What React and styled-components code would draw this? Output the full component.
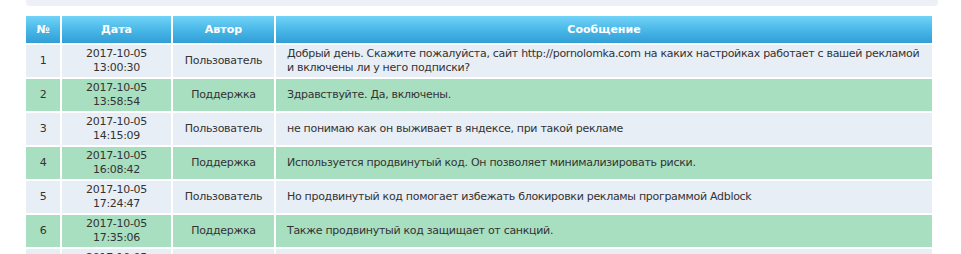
import React from "react";
import styled, { createGlobalStyle } from "styled-components";

const GlobalStyle = createGlobalStyle`
  body {
    margin: 0;
    background: #ffffff;
    font-family: "DejaVu Sans", Verdana, sans-serif;
  }
`;

const Page = styled.div`
  padding: 0 23px 0 26px;
  display: flex;
  flex-direction: column;
  gap: 8px;
`;

const TopPanel = styled.div`
  height: 6px;
  background: #edf1f7;
  border-radius: 0 0 4px 4px;
`;

const Table = styled.table`
  width: 906px;
  table-layout: fixed;
  border-collapse: separate;
  border-spacing: 0 2px;
  font-size: 11px;
  letter-spacing: -0.3px;
  color: #333333;
`;

const HeadCell = styled.th`
  height: 27px;
  padding: 0;
  font-weight: bold;
  letter-spacing: 0;
  color: #ffffff;
  text-align: center;
  background: linear-gradient(to bottom, #72d3f7 0%, #4ab8e8 50%, #319ed6 100%);
  border-right: 2px solid #ffffff;
  width: ${({ $w }) => ($w ? `${$w}px` : "auto")};
  &:last-child {
    border-right: none;
  }
`;

const Row = styled.tr`
  background: ${({ $support }) => ($support ? "#a9dfc1" : "#e8eef6")};
`;

const Cell = styled.td`
  height: 32px;
  padding: ${({ $left }) => ($left ? "0 8px 0 11px" : "0")};
  line-height: 14px;
  text-align: ${({ $left }) => ($left ? "left" : "center")};
  border-right: 2px solid #ffffff;
  &:last-child {
    border-right: none;
  }
`;

const rows = [
  {
    id: 1,
    date: "2017-10-05",
    time: "13:00:30",
    author: "Пользователь",
    text: "Добрый день. Скажите пожалуйста, сайт http://pornolomka.com на каких настройках работает с вашей рекламой и включены ли у него подписки?",
  },
  { id: 2, date: "2017-10-05", time: "13:58:54", author: "Поддержка", text: "Здравствуйте. Да, включены." },
  { id: 3, date: "2017-10-05", time: "14:15:09", author: "Пользователь", text: "не понимаю как он выживает в яндексе, при такой рекламе" },
  { id: 4, date: "2017-10-05", time: "16:08:42", author: "Поддержка", text: "Используется продвинутый код. Он позволяет минимализировать риски." },
  { id: 5, date: "2017-10-05", time: "17:24:47", author: "Пользователь", text: "Но продвинутый код помогает избежать блокировки рекламы программой Adblock" },
  { id: 6, date: "2017-10-05", time: "17:35:06", author: "Поддержка", text: "Также продвинутый код защищает от санкций." },
  { id: 7, date: "2017-10-05", time: "17:40:12", author: "Пользователь", text: "" },
];

const App = () => (
  <Page>
    <GlobalStyle />
    <TopPanel />
    <Table>
      <thead>
        <tr>
          <HeadCell $w={34}>№</HeadCell>
          <HeadCell $w={109}>Дата</HeadCell>
          <HeadCell $w={101}>Автор</HeadCell>
          <HeadCell>Сообщение</HeadCell>
        </tr>
      </thead>
      <tbody>
        {rows.map((r) => (
          <Row key={r.id} $support={r.author === "Поддержка"}>
            <Cell>{r.id}</Cell>
            <Cell>
              {r.date}
              <br />
              {r.time}
            </Cell>
            <Cell>{r.author}</Cell>
            <Cell $left>{r.text}</Cell>
          </Row>
        ))}
      </tbody>
    </Table>
  </Page>
);

export default App;
